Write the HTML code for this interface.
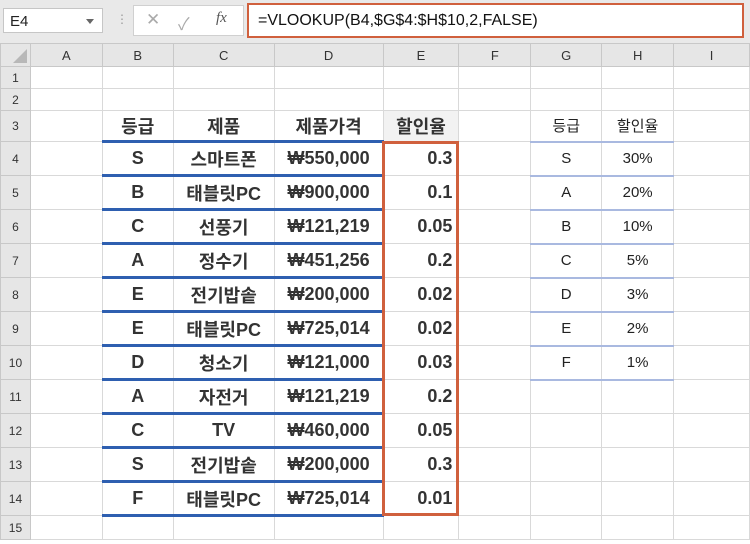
<!DOCTYPE html>
<html><head><meta charset="utf-8"><style>
body{margin:0;width:750px;height:544px;overflow:hidden;background:#fff;font-family:"Liberation Sans","Noto Sans CJK KR",sans-serif;position:relative}
.top{position:absolute;left:0;top:0;width:750px;height:43px;background:#e9e9e9}
.nb{position:absolute;left:3px;top:8px;width:100px;height:25px;background:#fff;border:1px solid #c6c6c6;font-size:15px;line-height:25px;padding-left:6px;box-sizing:border-box;color:#222}
.nb:after{content:"";position:absolute;right:8px;top:10px;border:4px solid transparent;border-top:5px solid #666}
.fx{position:absolute;left:133px;top:5px;width:109px;height:29px;background:#fff;border:1px solid #d0d0d0;color:#aaa;font-size:17px}
.fb{position:absolute;left:247px;top:3px;width:497px;height:35px;border:2px solid #d0603d;background:#fff;box-sizing:border-box;font-size:16px;line-height:31px;padding-left:9px;color:#111}
table{position:absolute;left:0;top:43px;border-collapse:collapse;table-layout:fixed;font-family:"Liberation Sans","Noto Sans CJK KR",sans-serif}
td{border:1px solid #d9d9d9;padding:0;text-align:center;font-size:18px;font-weight:bold;color:#333;overflow:hidden;white-space:nowrap}
tr.h td{background:#e6e6e6;font-weight:normal;font-size:13px;color:#333;border-color:#c8c8c8;height:22px}
td.r{background:#e6e6e6;font-weight:normal;font-size:12px;border-color:#c8c8c8}
tr.b td.c{border-bottom:3px solid #2e5fb0}
td.e{text-align:right;padding-right:6px}
td.g{font-weight:normal;font-size:15px;color:#222}
tr.l td.g{border-bottom:2px solid #a9b9e0}
.ob{position:absolute;left:382px;top:141px;width:77px;height:375px;border:3px solid #d0603d;box-sizing:border-box}
</style></head><body>
<div class="top"></div>
<div class="nb">E4</div>
<div style="position:absolute;left:116px;top:12px;color:#999;font-size:12px">⋮</div>
<div class="fx"><span style="position:absolute;left:12px;top:4px">✕</span><span style="position:absolute;left:44px;top:4px">✓</span><span style="position:absolute;left:82px;top:4px;color:#555;font-style:italic;font-family:'Liberation Serif',serif;font-size:15px">fx</span></div>
<div class="fb">=VLOOKUP(B4,$G$4:$H$10,2,FALSE)</div>
<table>
<colgroup><col style="width:30px"><col style="width:72px"><col style="width:71px"><col style="width:101px"><col style="width:109px"><col style="width:76px"><col style="width:72px"><col style="width:71px"><col style="width:72px"><col style="width:76px"></colgroup>
<tr class="h"><td style="position:relative"><div style="position:absolute;right:3px;bottom:3px;width:0;height:0;border-left:14px solid transparent;border-bottom:14px solid #b8b8b8"></div></td><td>A</td><td>B</td><td>C</td><td>D</td><td>E</td><td>F</td><td>G</td><td>H</td><td>I</td></tr>
<tr style="height:22px"><td class="r">1</td><td></td><td></td><td></td><td></td><td></td><td></td><td></td><td></td><td></td></tr>
<tr style="height:22px"><td class="r">2</td><td></td><td></td><td></td><td></td><td></td><td></td><td></td><td></td><td></td></tr>
<tr class="b l" style="height:31px"><td class="r">3</td><td></td><td class="c">등급</td><td class="c">제품</td><td class="c">제품가격</td><td style="background:#f2f2f2">할인율</td><td></td><td class="g">등급</td><td class="g">할인율</td><td></td></tr>
<tr class="b l" style="height:34px"><td class="r">4</td><td></td><td class="c">S</td><td class="c">스마트폰</td><td class="c">₩550,000</td><td class="e">0.3</td><td></td><td class="g">S</td><td class="g">30%</td><td></td></tr>
<tr class="b l" style="height:34px"><td class="r">5</td><td></td><td class="c">B</td><td class="c">태블릿PC</td><td class="c">₩900,000</td><td class="e">0.1</td><td></td><td class="g">A</td><td class="g">20%</td><td></td></tr>
<tr class="b l" style="height:34px"><td class="r">6</td><td></td><td class="c">C</td><td class="c">선풍기</td><td class="c">₩121,219</td><td class="e">0.05</td><td></td><td class="g">B</td><td class="g">10%</td><td></td></tr>
<tr class="b l" style="height:34px"><td class="r">7</td><td></td><td class="c">A</td><td class="c">정수기</td><td class="c">₩451,256</td><td class="e">0.2</td><td></td><td class="g">C</td><td class="g">5%</td><td></td></tr>
<tr class="b l" style="height:34px"><td class="r">8</td><td></td><td class="c">E</td><td class="c">전기밥솥</td><td class="c">₩200,000</td><td class="e">0.02</td><td></td><td class="g">D</td><td class="g">3%</td><td></td></tr>
<tr class="b l" style="height:34px"><td class="r">9</td><td></td><td class="c">E</td><td class="c">태블릿PC</td><td class="c">₩725,014</td><td class="e">0.02</td><td></td><td class="g">E</td><td class="g">2%</td><td></td></tr>
<tr class="b l" style="height:34px"><td class="r">10</td><td></td><td class="c">D</td><td class="c">청소기</td><td class="c">₩121,000</td><td class="e">0.03</td><td></td><td class="g">F</td><td class="g">1%</td><td></td></tr>
<tr class="b" style="height:34px"><td class="r">11</td><td></td><td class="c">A</td><td class="c">자전거</td><td class="c">₩121,219</td><td class="e">0.2</td><td></td><td></td><td></td><td></td></tr>
<tr class="b" style="height:34px"><td class="r">12</td><td></td><td class="c">C</td><td class="c">TV</td><td class="c">₩460,000</td><td class="e">0.05</td><td></td><td></td><td></td><td></td></tr>
<tr class="b" style="height:34px"><td class="r">13</td><td></td><td class="c">S</td><td class="c">전기밥솥</td><td class="c">₩200,000</td><td class="e">0.3</td><td></td><td></td><td></td><td></td></tr>
<tr class="b" style="height:34px"><td class="r">14</td><td></td><td class="c">F</td><td class="c">태블릿PC</td><td class="c">₩725,014</td><td class="e">0.01</td><td></td><td></td><td></td><td></td></tr>
<tr style="height:24px"><td class="r">15</td><td></td><td></td><td></td><td></td><td></td><td></td><td></td><td></td><td></td></tr>
</table>
<div class="ob"></div>
</body></html>
